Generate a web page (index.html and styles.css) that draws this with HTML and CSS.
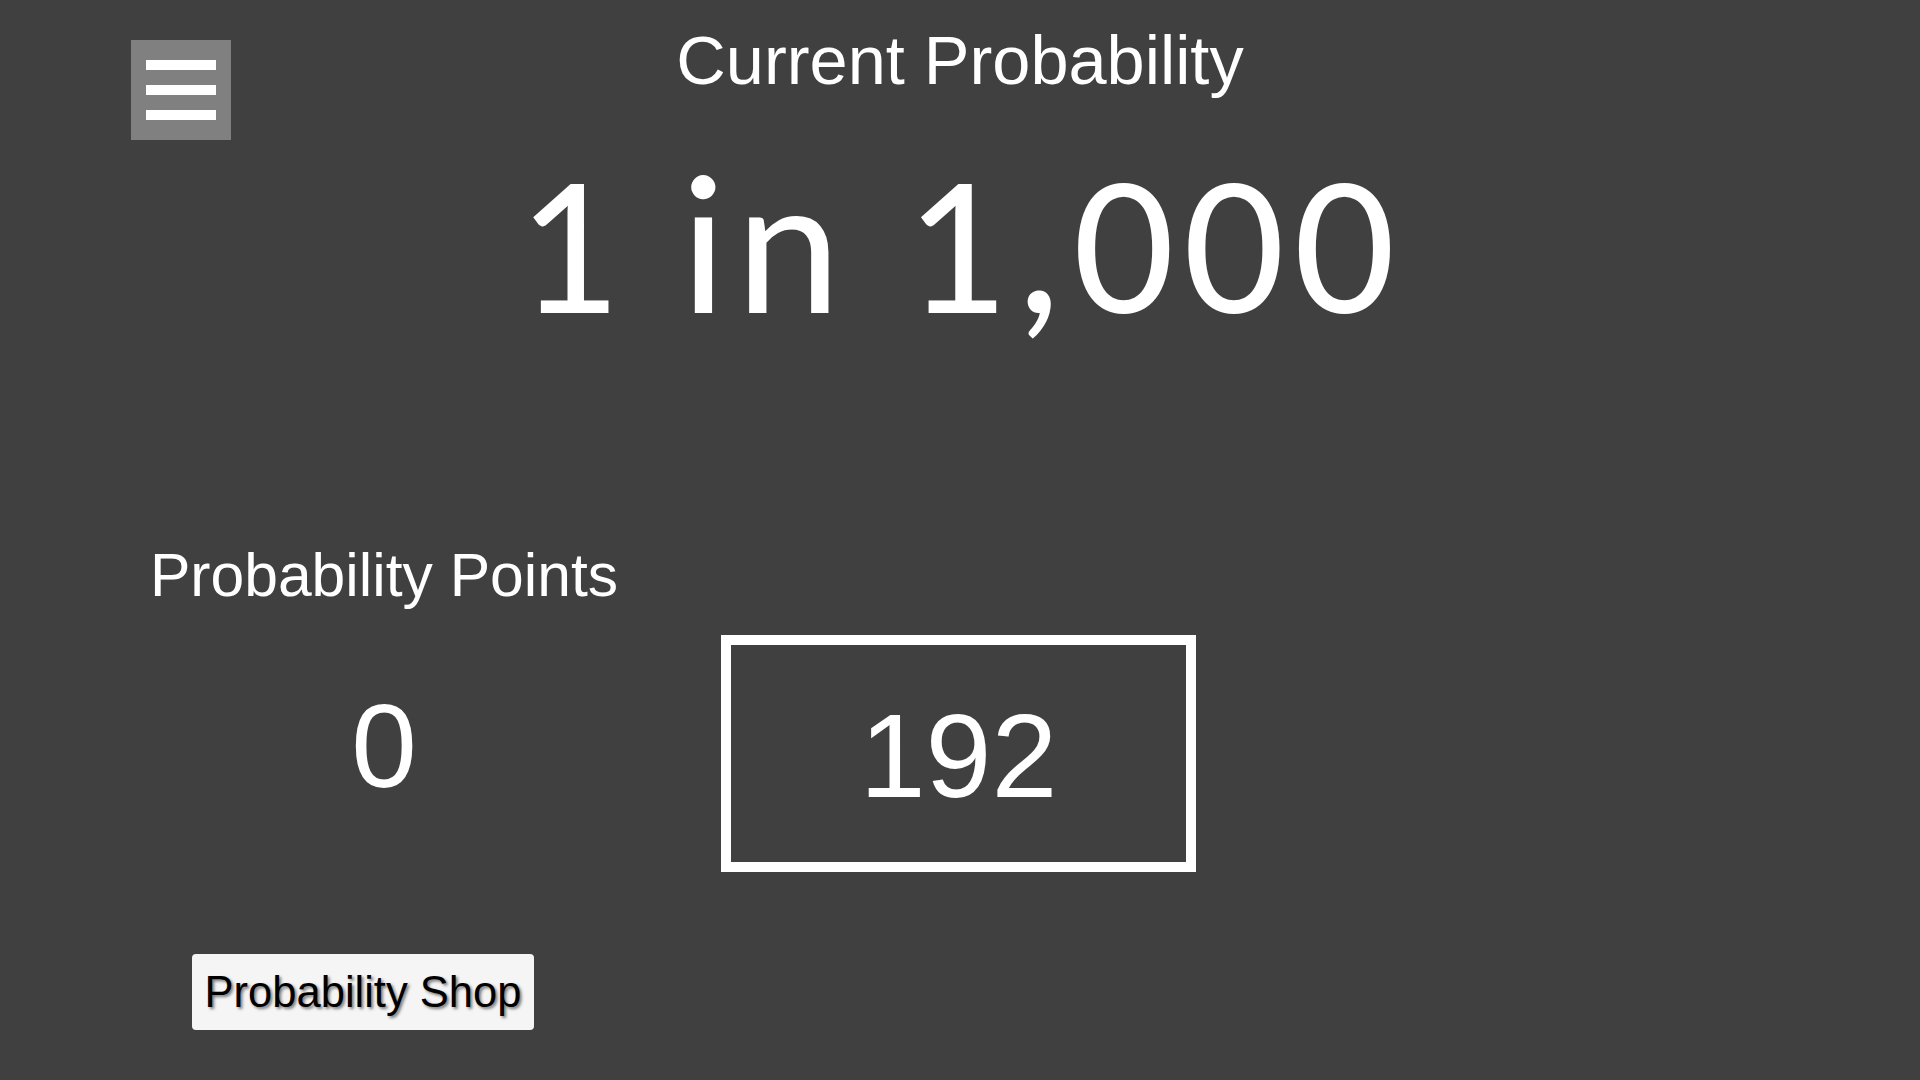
FILE: index.html
```html
<!DOCTYPE html>
<html lang="en">
<head>
<meta charset="utf-8">
<title>Probability</title>
<link rel="stylesheet" href="styles.css">
</head>
<body>
<header class="header">
  <button class="menu-btn" aria-label="Menu">
    <span class="bar"></span>
    <span class="bar"></span>
    <span class="bar"></span>
  </button>
  <h1 class="title">Current Probability</h1>
  <div class="spacer"></div>
</header>

<div class="odds">1 in 1,000</div>

<section class="points-row">
  <div class="points-col">
    <div class="points-label">Probability Points</div>
    <div class="points-value">0</div>
  </div>
  <div class="roll-box">192</div>
</section>

<button class="shop-btn">Probability Shop</button>
</body>
</html>
```

FILE: styles.css
```css
* {
  box-sizing: border-box;
}

html, body {
  margin: 0;
  padding: 0;
}

body {
  background: #404040;
  color: #ffffff;
  font-family: "Liberation Sans", Arial, sans-serif;
  width: 1920px;
  height: 1080px;
  overflow: hidden;
}

.header {
  display: grid;
  grid-template-columns: 1fr auto 1fr;
  align-items: start;
}

.menu-btn {
  justify-self: start;
  margin: 40px 0 0 131px;
  width: 100px;
  height: 100px;
  padding: 20px 15px;
  background: #808080;
  border: none;
  display: flex;
  flex-direction: column;
  gap: 15px;
  cursor: pointer;
}

.bar {
  display: block;
  width: 70px;
  height: 10px;
  background: #ffffff;
}

.title {
  margin: 22px 0 0 0;
  font-size: 68.5px;
  font-weight: normal;
  line-height: 78px;
  text-align: center;
}

.odds {
  margin-top: 5px;
  font-family: "Carlito", "Calibri", "Lato", sans-serif;
  font-size: 200px;
  line-height: 200px;
  letter-spacing: 9px;
  text-align: center;
}

.points-row {
  display: flex;
  align-items: flex-start;
  margin-top: 196px;
}

.points-col {
  width: 721px;
  padding-left: 47px;
  text-align: center;
}

.points-label {
  font-size: 60.6px;
  line-height: 69px;
}

.points-value {
  margin-top: 69px;
  font-size: 118px;
  line-height: 134px;
}

.roll-box {
  margin-top: 94px;
  width: 475px;
  height: 237px;
  border: 10px solid #ffffff;
  display: flex;
  align-items: center;
  justify-content: center;
  padding-top: 4px;
  font-size: 118.5px;
  line-height: 134px;
}

.shop-btn {
  display: block;
  margin: 82px 0 0 192px;
  width: 342px;
  height: 76px;
  padding: 0;
  background: #f5f5f5;
  color: #000000;
  border: none;
  border-radius: 4px;
  font-family: "Liberation Sans", Arial, sans-serif;
  font-size: 43.5px;
  line-height: 50px;
  text-align: center;
  text-shadow: 2px 2px 3px rgba(0, 0, 0, 0.5);
  cursor: pointer;
}
```
